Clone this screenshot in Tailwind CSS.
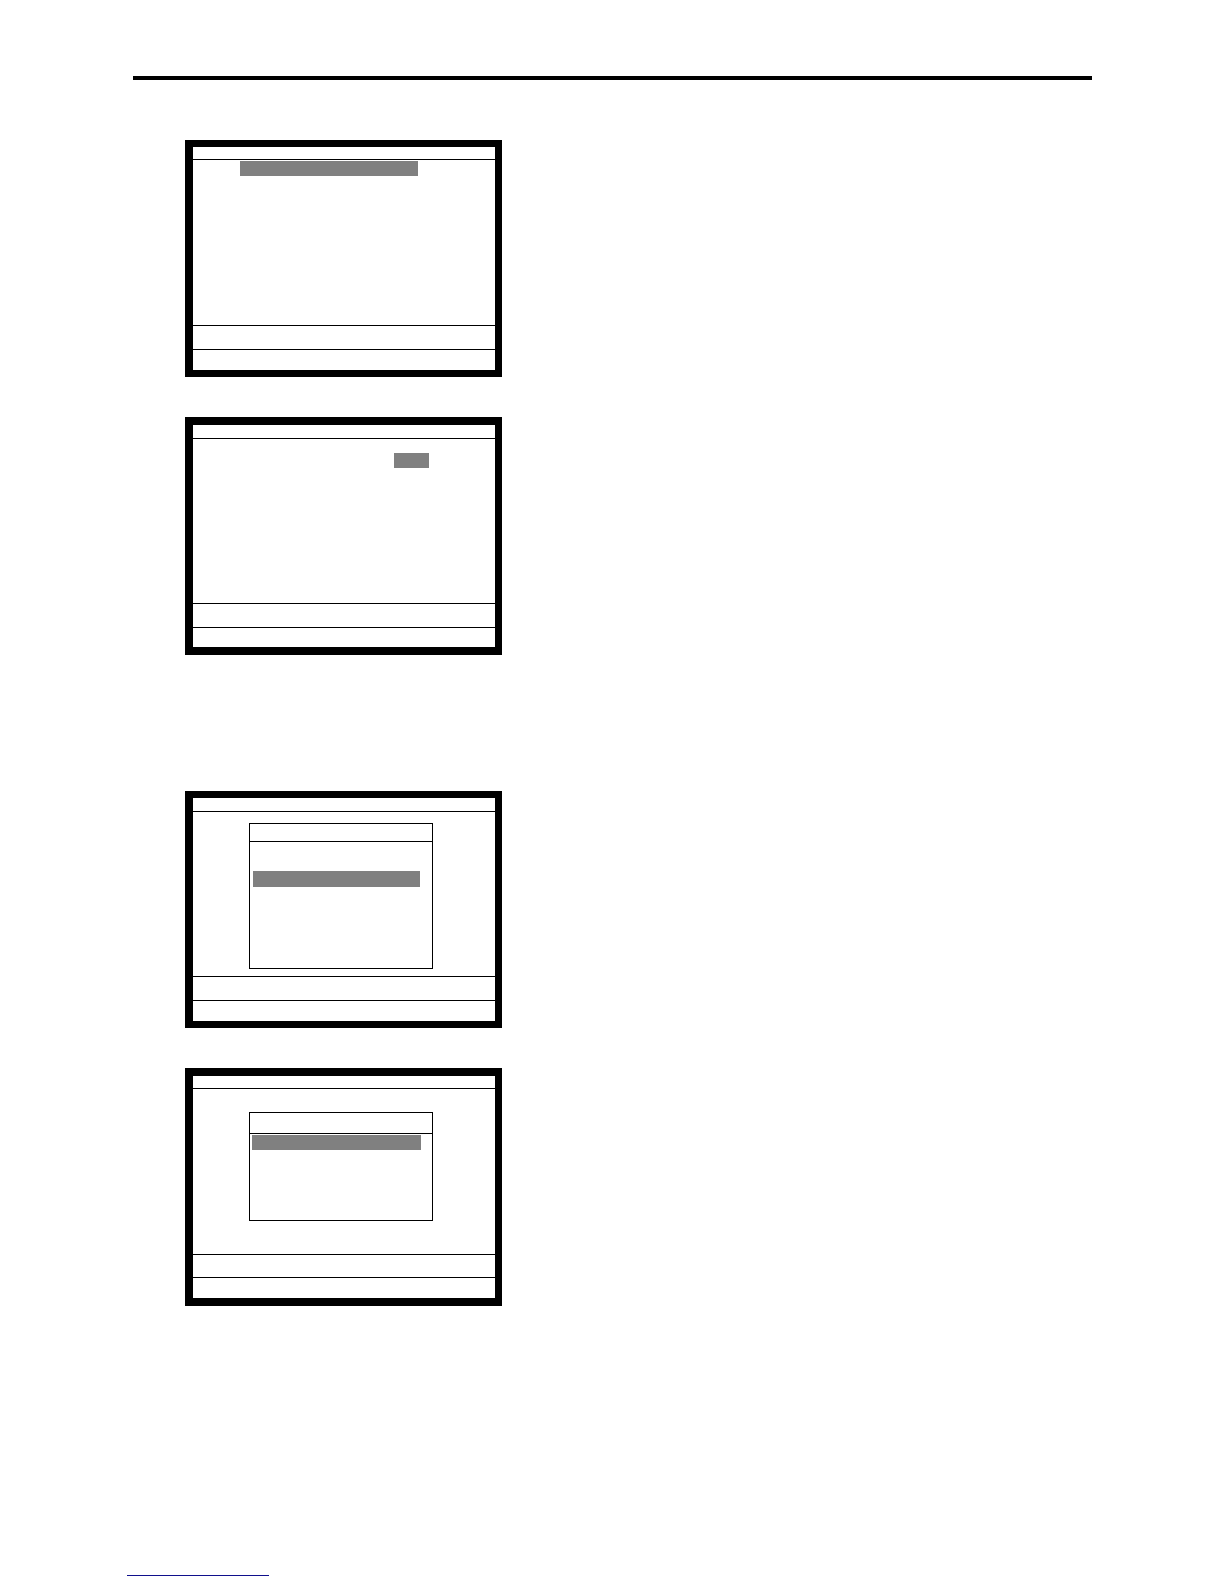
<!DOCTYPE html>
<html lang="en">
<head>
    <meta charset="UTF-8">
    <meta name="viewport" content="width=device-width, initial-scale=1.0">
    <title>Program screens</title>
    <script src="https://cdn.jsdelivr.net/npm/@tailwindcss/browser@4"></script>
</head>
<body class="bg-white font-['Liberation_Sans',sans-serif]">
    <div class="min-h-screen flex flex-col">
        <header class="mt-[76px] ml-[133px] mr-[132px] h-1 bg-black"></header>

        <main class="ml-[185px] mt-[60px] flex flex-col items-start gap-10">
            <!-- List screen, first row selected -->
            <section class="w-[317px] flex flex-col border-y-7 border-l-8 border-r-7 border-black">
                <div class="h-[13px] border-b border-black"></div>
                <div class="h-[165px] pt-px pl-[47px]">
                    <div class="w-[178px] h-[15px] bg-[#808080]"></div>
                </div>
                <div class="h-6 border-t border-black"></div>
                <div class="h-[21px] border-t border-black"></div>
            </section>

            <!-- Settings screen, value field selected -->
            <section class="w-[317px] flex flex-col border-y-8 border-l-8 border-r-7 border-black">
                <div class="h-[14px] border-b border-black"></div>
                <div class="h-[164px] pt-[14px] pl-[201px]">
                    <div class="w-[35px] h-[15px] bg-[#808080]"></div>
                </div>
                <div class="h-6 border-t border-black"></div>
                <div class="h-5 border-t border-black"></div>
            </section>

            <!-- Menu window, third row selected -->
            <section class="mt-24 w-[317px] flex flex-col border-y-7 border-l-8 border-r-7 border-black">
                <div class="h-[14px] border-b border-black"></div>
                <div class="h-[164px] pt-[11px] pl-14">
                    <div class="w-[184px] h-[146px] border border-black">
                        <div class="h-[18px] border-b border-black"></div>
                        <div class="pt-[29px] pl-[3px]">
                            <div class="w-[167px] h-4 bg-[#808080]"></div>
                        </div>
                    </div>
                </div>
                <div class="h-6 border-t border-black"></div>
                <div class="h-[21px] border-t border-black"></div>
            </section>

            <!-- Menu window, first row selected -->
            <section class="w-[317px] flex flex-col border-y-8 border-l-8 border-r-7 border-black">
                <div class="h-[13px] border-b border-black"></div>
                <div class="h-[165px] pt-[23px] pl-14">
                    <div class="w-[184px] h-[109px] border border-black">
                        <div class="h-[21px] border-b border-black"></div>
                        <div class="pt-px pl-[2px]">
                            <div class="w-[169px] h-[15px] bg-[#808080]"></div>
                        </div>
                    </div>
                </div>
                <div class="h-[23px] border-t border-black"></div>
                <div class="h-[21px] border-t border-black"></div>
            </section>
        </main>

        <footer class="mt-auto ml-[127px] pb-2">
            <a href="#" aria-label="Back to top" class="block w-[142px] h-4 border-b border-[#10108c]"></a>
        </footer>
    </div>
</body>
</html>
